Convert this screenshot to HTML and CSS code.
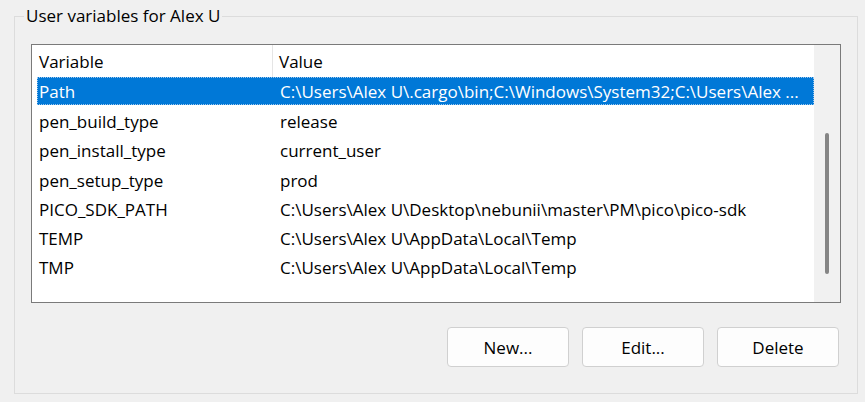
FILE: index.html
```html
<!DOCTYPE html>
<html>
<head>
<meta charset="utf-8">
<link rel="stylesheet" href="styles.css">
</head>
<body>
<div class="group">
  <div class="legend">User variables for Alex U</div>
  <div class="listbox">
    <div class="list">
      <div class="header">
        <div class="hcell c1">Variable</div>
        <div class="hcell c2">Value</div>
      </div>
      <div class="row selected">
        <div class="cell c1">Path</div>
        <div class="cell c2">C:\Users\Alex U\.cargo\bin;C:\Windows\System32;C:\Users\Alex ...</div>
      </div>
      <div class="row"><div class="cell c1">pen_build_type</div><div class="cell c2">release</div></div>
      <div class="row"><div class="cell c1">pen_install_type</div><div class="cell c2">current_user</div></div>
      <div class="row"><div class="cell c1">pen_setup_type</div><div class="cell c2">prod</div></div>
      <div class="row"><div class="cell c1">PICO_SDK_PATH</div><div class="cell c2">C:\Users\Alex U\Desktop\nebunii\master\PM\pico\pico-sdk</div></div>
      <div class="row"><div class="cell c1">TEMP</div><div class="cell c2">C:\Users\Alex U\AppData\Local\Temp</div></div>
      <div class="row"><div class="cell c1">TMP</div><div class="cell c2">C:\Users\Alex U\AppData\Local\Temp</div></div>
    </div>
    <div class="scrollbar"><div class="thumb"></div></div>
  </div>
  <div class="buttons">
    <button class="btn">New...</button>
    <button class="btn">Edit...</button>
    <button class="btn">Delete</button>
  </div>
</div>
</body>
</html>
```

FILE: styles.css
```css
html, body {
  margin: 0;
  padding: 0;
  background: #f0f0f0;
  width: 865px;
  height: 402px;
  overflow: hidden;
  font-family: "Open Sans", "Noto Sans", sans-serif;
  font-size: 17px;
  color: #000;
}
.group {
  margin: 16px 0 0 14px;
  border: 1px solid #dcdcdc;
  display: flex;
  flex-direction: column;
  padding: 0 16px;
  box-sizing: border-box;
  width: 844px;
  height: 378px;
}
.legend {
  margin: -12px 0 0 -7px;
  padding: 0 2px;
  background: #f0f0f0;
  align-self: flex-start;
  line-height: 22px;
  font-size: 17px;
}
.listbox {
  margin-top: 17px;
  width: 810px;
  height: 259px;
  border: 1px solid #7a7a7a;
  box-sizing: border-box;
  background: #fff;
  display: flex;
}
.list {
  flex: 1;
  display: flex;
  flex-direction: column;
  padding: 0 0 0 5px;
}
.header {
  display: flex;
  height: 32px;
  align-items: center;
  margin-left: -5px;
}
.hcell {
  height: 32px;
  line-height: 34px;
  box-sizing: border-box;
}
.header .c1 {
  width: 241px;
  padding-left: 7px;
  border-right: 1px solid #e5e5e5;
}
.header .c2 {
  padding-left: 6px;
}
.row {
  display: flex;
  height: 29.2px;
  line-height: 31px;
  white-space: nowrap;
  box-sizing: border-box;
}
.row .c1 {
  width: 243px;
  padding-left: 2px;
  box-sizing: border-box;
}
.row.selected {
  background: #0078d7;
  color: #fff;
  outline: 1px dotted #9ec8ee;
  outline-offset: -1px;
  height: 28px;
  margin-bottom: 1.2px;
  line-height: 30px;
}
.scrollbar {
  width: 26px;
  background: #f1f1f1;
  display: flex;
  justify-content: center;
  padding-top: 88px;
  box-sizing: border-box;
}
.thumb {
  width: 4px;
  height: 141px;
  background: #858585;
  border-radius: 2px;
}
.buttons {
  display: flex;
  justify-content: flex-end;
  gap: 13px;
  margin-top: 24px;
  width: 808px;
}
.btn {
  width: 122px;
  height: 40px;
  background: #fdfdfd;
  border: 1px solid #d0d0d0;
  border-radius: 4px;
  font-family: "Open Sans", "Noto Sans", sans-serif;
  font-size: 17px;
  color: #000;
  padding: 0;
}
```
